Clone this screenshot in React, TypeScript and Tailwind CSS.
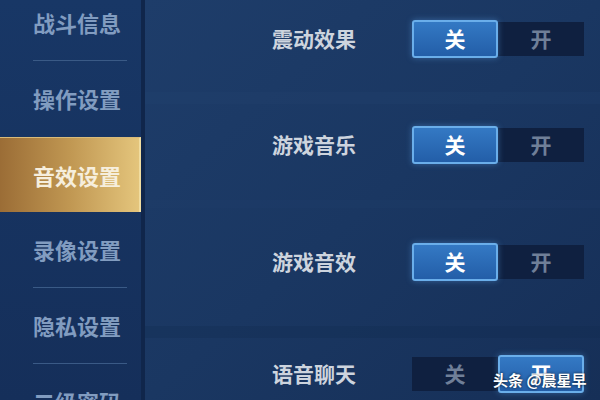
import React from 'react';

type MenuItem = { label: string; active?: boolean };

const menu: MenuItem[] = [
  { label: '战斗信息' },
  { label: '操作设置' },
  { label: '音效设置', active: true },
  { label: '录像设置' },
  { label: '隐私设置' },
  { label: '二级密码' },
];

type Row = { label: string; on: boolean; top: string };

const rows: Row[] = [
  { label: '震动效果', on: false, top: 'mt-[20px]' },
  { label: '游戏音乐', on: false, top: 'mt-[68px]' },
  { label: '游戏音效', on: false, top: 'mt-[79px]' },
  { label: '语音聊天', on: true, top: 'mt-[74px]' },
];

const font = { fontFamily: '"Noto Sans CJK SC", "Noto Sans", sans-serif' };

function Segment({ text, active }: { text: string; active: boolean }) {
  if (active) {
    return (
      <div className="w-[86px] h-[38px] flex items-center justify-center rounded-[3px] border-2 border-[#6aaeea] bg-gradient-to-b from-[#3479c4] to-[#235ea8] shadow-[0_0_6px_rgba(90,160,230,0.45)] text-[21px] font-bold text-white z-10">
        {text}
      </div>
    );
  }
  return (
    <div className="w-[86px] h-[34px] flex items-center justify-center bg-[#0f2040] text-[21px] font-bold text-[#6f7f98]">
      {text}
    </div>
  );
}

function Toggle({ on }: { on: boolean }) {
  return (
    <div className="flex items-center">
      <Segment text="关" active={!on} />
      <Segment text="开" active={on} />
    </div>
  );
}

export default function App() {
  return (
    <div className="w-[600px] h-[400px] overflow-hidden flex bg-[#1a3762]" style={font}>
      {/* left tab list */}
      <aside className="w-[145px] h-full flex-none bg-gradient-to-b from-[#183766] to-[#152f5a] border-r-[4px] border-[#10264b]">
        <div className="-mt-[15px] flex flex-col">
          {menu.map((item, i) => {
            const next = menu[i + 1];
            const showLine = !item.active && next && !next.active && i !== 1;
            if (item.active) {
              return (
                <div
                  key={item.label}
                  className="h-[75px] flex items-center pl-[33px] bg-gradient-to-r from-[#9b6d36] via-[#c09752] to-[#e4c57c] border-t border-[#d9bb7a] border-r-2 border-r-[#f0dca0] text-[22px] font-bold text-[#f6eedd]"
                >
                  {item.label}
                </div>
              );
            }
            return (
              <div key={item.label} className="h-[76px] flex flex-col">
                <div className="flex-1 flex items-center pl-[33px] text-[22px] font-bold text-[#819cc0]">
                  {item.label}
                </div>
                <div className={`ml-[33px] mr-[14px] h-px ${showLine ? 'bg-[#3a5a86]' : 'bg-transparent'}`} />
              </div>
            );
          })}
        </div>
      </aside>

      {/* sound settings */}
      <main className="relative flex-1 h-full bg-gradient-to-br from-[#1e3d6a] via-[#1a3762] to-[#162f57]">
        <div className="absolute left-0 right-0 top-[92px] h-[12px] bg-[#23426f]/25" />
        <div className="absolute left-0 right-0 top-[200px] h-[8px] bg-[#23426f]/20" />
        <div className="absolute left-0 right-0 top-[326px] h-[12px] bg-[#122a50]/30" />

        <div className="relative flex flex-col pl-[127px]">
          {rows.map(r => (
            <div key={r.label} className={`flex items-center h-[38px] ${r.top}`}>
              <span className="w-[140px] text-[21px] font-bold text-[#cdd4de]">{r.label}</span>
              <Toggle on={r.on} />
            </div>
          ))}
        </div>

        <div className="absolute z-20 left-[348px] top-[369px] text-[15px] font-bold text-white [text-shadow:0_0_3px_rgba(0,0,0,0.8)] whitespace-nowrap">
          头条 @晨星早
        </div>
      </main>
    </div>
  );
}
